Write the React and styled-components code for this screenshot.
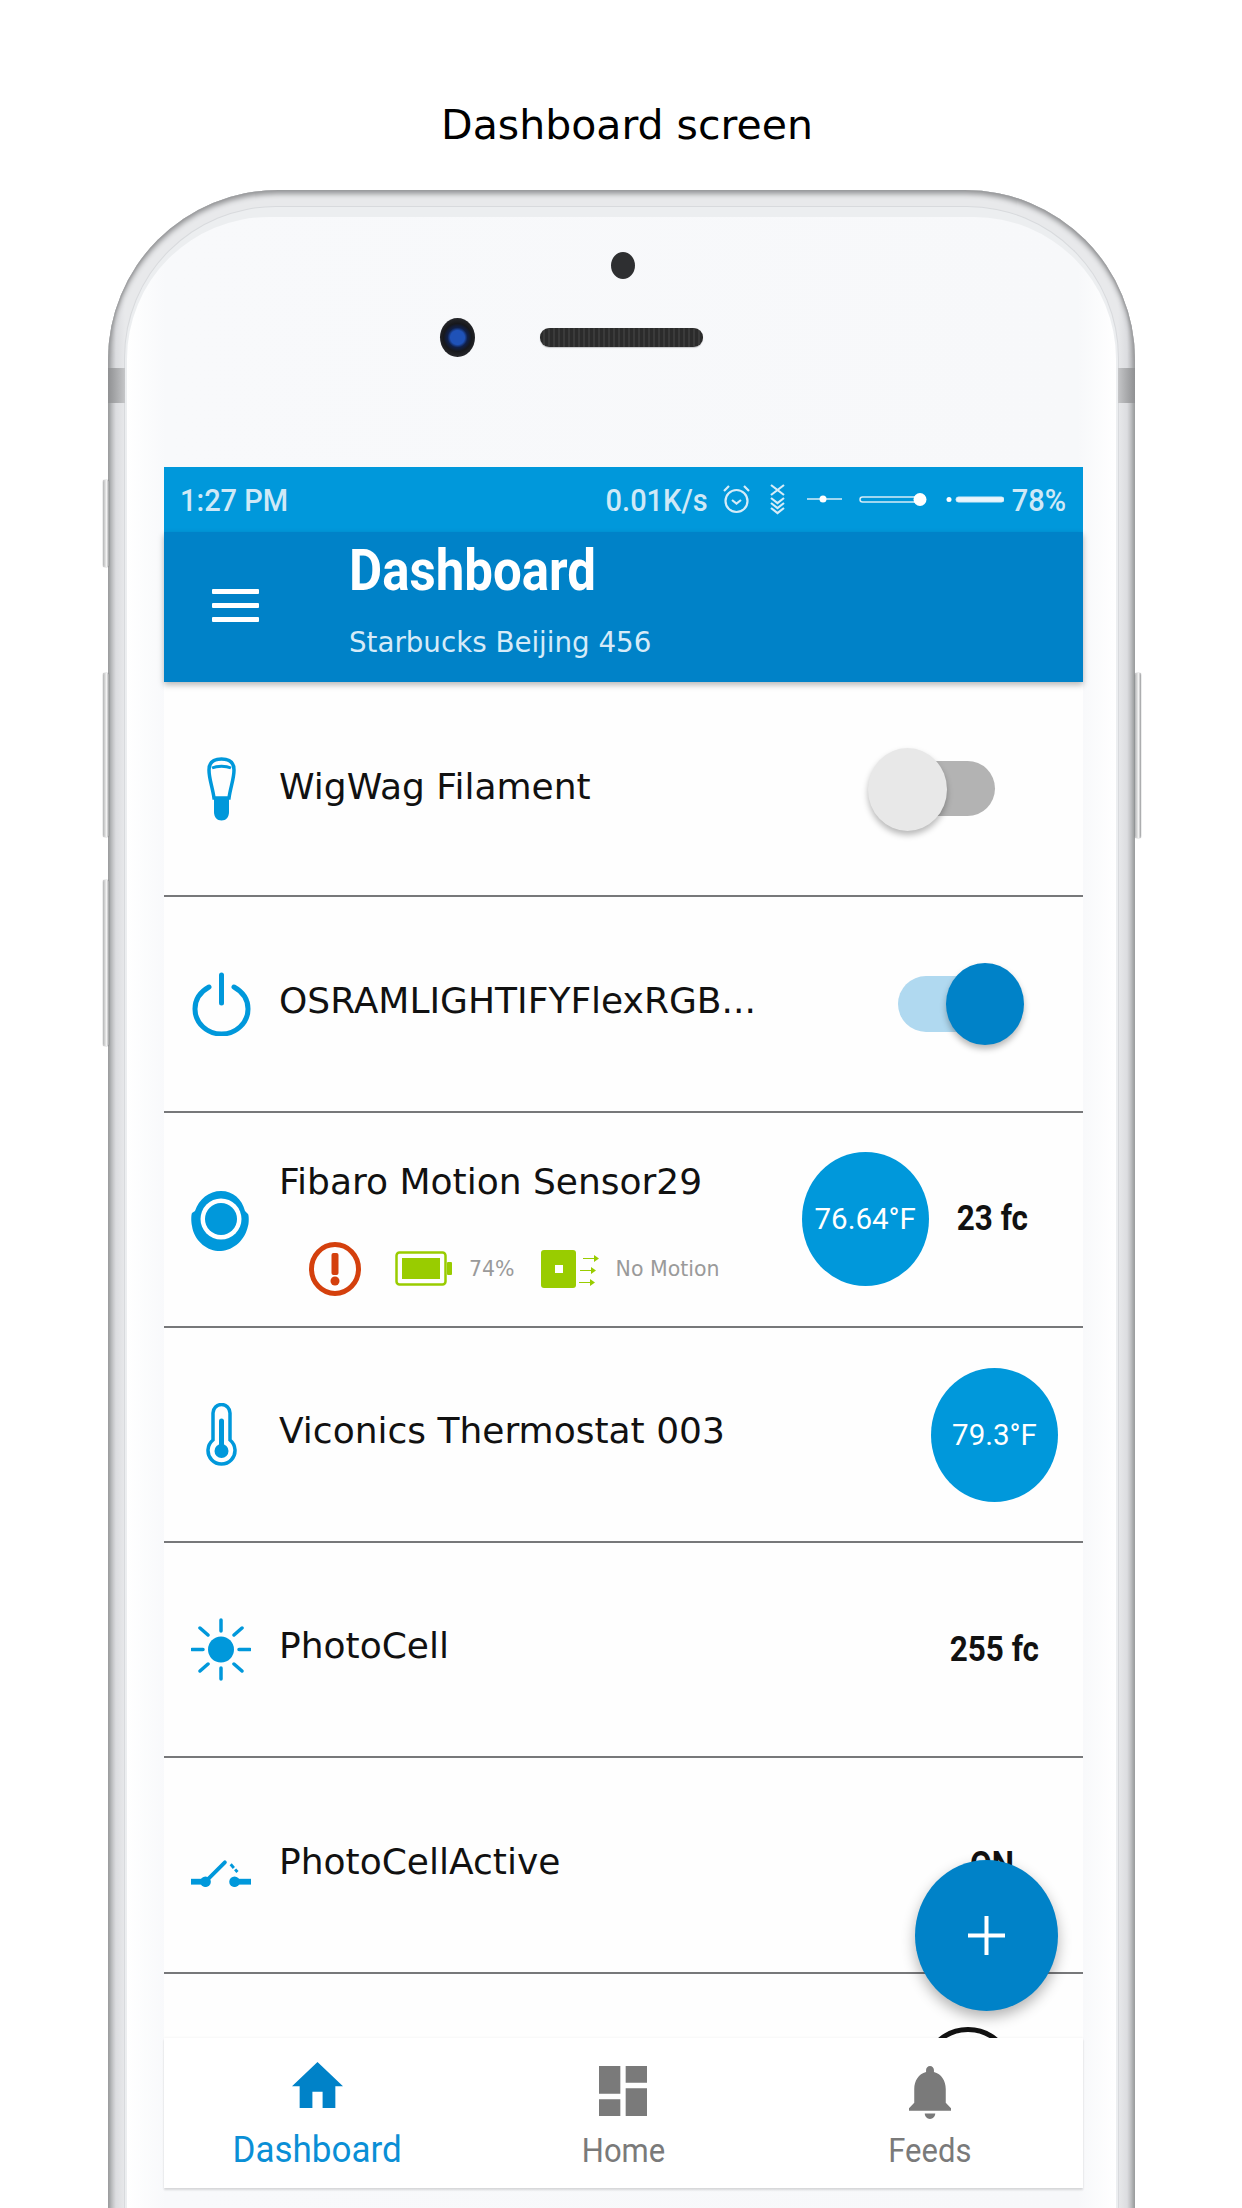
import React from "react";
import styled, { createGlobalStyle } from "styled-components";

const Global = createGlobalStyle`
  html, body { margin: 0; padding: 0; background: #fff; }
`;

const BLUE = "#0098db";
const DEEP = "#0082c8";
const GREEN = "#99cc00";
const SANS = '"DejaVu Sans", sans-serif';

const Page = styled.div`
  width: 1242px;
  height: 2208px;
  overflow: hidden;
  background: #fff;
  display: flex;
  flex-direction: column;
  align-items: flex-start;
`;
const Caption = styled.h1`
  flex: none;
  margin: 0;
  width: 100%;
  height: 190px;
  box-sizing: border-box;
  padding: 100px 0 0 12px;
  text-align: center;
  font: 400 41px/50px ${SANS};
  color: #000;
`;
const Phone = styled.div`
  position: relative;
  flex: none;
  margin-left: 108px;
  width: 1027px;
  height: 2100px;
  box-sizing: border-box;
  padding: 16px 16px 0;
  border-radius: 170px 170px 0 0;
  background: linear-gradient(
    90deg,
    #a8a9ab 0,
    #dcdde0 8px,
    #e8e9eb 17px,
    #e8e9eb calc(100% - 17px),
    #dcdde0 calc(100% - 8px),
    #a8a9ab 100%
  );
  box-shadow: inset 0 3px 5px 1px #98999b, inset 1px 0 2px #a2a3a5, inset -1px 0 2px #a2a3a5;
`;
const Antenna = styled.span`
  position: absolute;
  top: 178px;
  ${(p) => (p.$right ? "right: 0;" : "left: 0;")}
  width: 17px;
  height: 35px;
  background: linear-gradient(${(p) => (p.$right ? "270deg" : "90deg")}, #8f9092, #c5c6c8);
`;
const SideKey = styled.span`
  position: absolute;
  top: ${(p) => p.$top}px;
  height: ${(p) => p.$h}px;
  ${(p) => (p.$right ? "right: -6px;" : "left: -5px;")}
  width: 6px;
  border-radius: 2px;
  background: linear-gradient(90deg, #b4b5b6, #f4f4f4 60%, #9a9b9d);
  box-shadow: 0 0 1px #44454a;
`;
const Ring = styled.div`
  height: 100%;
  box-sizing: border-box;
  padding: 10px 2px 0;
  border: 1px solid #d8dadd;
  border-bottom: 0;
  border-radius: 152px 152px 0 0;
  background: #eceef0;
`;
const Face = styled.div`
  height: 100%;
  box-sizing: border-box;
  padding: 35px 37px 0;
  border-radius: 142px 142px 0 0;
  background: linear-gradient(
    90deg,
    #fff 0,
    #f8f9fb 38px,
    #f7f8fa calc(100% - 38px),
    #fff 100%
  );
  display: flex;
  flex-direction: column;
`;
const Sensor = styled.span`
  align-self: center;
  margin-left: 3px;
  width: 24px;
  height: 27px;
  border-radius: 50%;
  background: #2e2f31;
`;
const CameraRow = styled.div`
  display: flex;
  align-items: center;
  gap: 65px;
  margin-top: 39px;
  padding-left: 276px;
  height: 39px;
`;
const Camera = styled.span`
  width: 35px;
  height: 39px;
  border-radius: 50%;
  background: radial-gradient(circle at 50% 50%, #1f52b8 0 7px, #10204a 10px, #17181c 14px, #3b3c40 100%);
`;
const Speaker = styled.span`
  width: 163px;
  height: 19px;
  border-radius: 9px;
  background: repeating-linear-gradient(90deg, #2b2b2b 0 3px, #3a3a3a 3px 5px);
  box-shadow: 0 1px 1px #c8c9cb;
`;
const Screen = styled.main`
  position: relative;
  margin-top: 110px;
  width: 919px;
  height: 1721px;
  flex: none;
  display: flex;
  flex-direction: column;
  background: #fefefe;
`;
const StatusBar = styled.div`
  flex: none;
  height: 65px;
  box-sizing: border-box;
  padding: 0 17px 0 16px;
  display: flex;
  align-items: center;
  justify-content: space-between;
  background: ${BLUE};
  color: #cfe9f7;
`;
const StatusText = styled.span`
  font: 500 29px/34px Roboto, sans-serif;
  display: inline-block;
  transform: scaleY(1.06);
`;
const StatusRight = styled.div`
  display: flex;
  align-items: center;
  gap: 12px;
  svg {
    margin: 0 -4px 0 3px;
  }
`;
const Header = styled.header`
  position: relative;
  z-index: 2;
  flex: none;
  height: 150px;
  box-sizing: border-box;
  padding-left: 48px;
  display: flex;
  align-items: center;
  gap: 90px;
  background: ${DEEP};
  box-shadow: 0 3px 6px rgba(0, 0, 0, 0.28);
`;
const Burger = styled.div`
  width: 47px;
  margin-top: -4px;
  display: flex;
  flex-direction: column;
  gap: 9px;
  & > span {
    height: 5px;
    background: #fff;
    border-radius: 1px;
  }
`;
const HeadText = styled.div`
  display: flex;
  flex-direction: column;
  gap: 30px;
  margin-top: -6px;
`;
const Title = styled.div`
  font: 700 51px/48px Roboto, sans-serif;
  color: #fff;
  transform: scaleY(1.13);
  transform-origin: left center;
`;
const Subtitle = styled.div`
  font: 400 27.7px/36px ${SANS};
  color: #d6ebf8;
`;
const List = styled.div`
  flex: 1;
  min-height: 0;
  overflow: hidden;
`;
const Row = styled.div`
  height: 213.3px;
  border-bottom: 2px solid #77787a;
  display: flex;
  align-items: center;
  padding-left: 27px;
`;
const IconBox = styled.div`
  flex: none;
  width: 60px;
  height: 70px;
  margin-top: ${(p) => p.$shift || 0}px;
  display: flex;
  align-items: center;
  justify-content: center;
`;
const Main = styled.div`
  flex: 1;
  min-width: 0;
  margin-left: 28px;
  display: flex;
  flex-direction: column;
  gap: ${(p) => p.$gap || 0}px;
  margin-top: ${(p) => p.$shift || 0}px;
`;
const Label = styled.div`
  font: 400 36px/44px ${SANS};
  color: #111;
  white-space: nowrap;
`;
const Meta = styled.div`
  display: flex;
  align-items: center;
  padding-left: 30px;
  height: 54px;
`;
const MetaText = styled.span`
  font: 400 20.5px/24px ${SANS};
  color: #9a9a9a;
  margin-left: ${(p) => p.$ml}px;
`;
const Trail = styled.div`
  flex: none;
  display: flex;
  align-items: center;
  gap: 28px;
  padding-right: ${(p) => p.$pr}px;
`;
const Bubble = styled.div`
  width: 127px;
  height: 134px;
  border-radius: 50%;
  background: ${BLUE};
  color: #fff;
  display: flex;
  align-items: center;
  justify-content: center;
  font: 400 29.5px/34px Roboto, sans-serif;
`;
const Reading = styled.span`
  font: 700 31.5px/34px Roboto, sans-serif;
  color: #111;
  display: inline-block;
  transform: scaleY(1.1);
`;
const Track = styled.div`
  position: relative;
  width: ${(p) => (p.$on ? 87 : 95)}px;
  height: ${(p) => (p.$on ? 56 : 55)}px;
  border-radius: 28px;
  background: ${(p) => (p.$on ? "#b0d9f0" : "#b3b3b3")};
`;
const Thumb = styled.span`
  position: absolute;
  top: -13px;
  ${(p) => (p.$on ? "right: -39px; background: #0082c8;" : "left: -32px; background: #e8e8e8;")}
  width: ${(p) => (p.$on ? 78 : 79)}px;
  height: ${(p) => (p.$on ? 82 : 83)}px;
  border-radius: 50%;
  box-shadow: 0 4px 6px rgba(0, 0, 0, 0.28);
`;
const Dial = styled.div`
  width: 92px;
  height: 92px;
  box-sizing: border-box;
  border: 5px solid #111;
  border-radius: 50%;
  margin-top: -14px;
`;
const Fab = styled.button`
  position: absolute;
  z-index: 3;
  right: 25px;
  bottom: 177px;
  width: 143px;
  height: 151px;
  padding: 0;
  border: 0;
  border-radius: 50%;
  background: ${DEEP};
  box-shadow: 0 6px 14px rgba(0, 0, 0, 0.3);
  display: flex;
  align-items: center;
  justify-content: center;
`;
const Nav = styled.nav`
  position: relative;
  z-index: 2;
  flex: none;
  height: 150px;
  display: grid;
  grid-template-columns: repeat(3, 1fr);
  background: #fff;
  box-shadow: 0 2px 2px rgba(0, 0, 0, 0.14), 0 -1px 2px rgba(0, 0, 0, 0.03);
`;
const Tab = styled.div`
  box-sizing: border-box;
  display: flex;
  flex-direction: column;
  align-items: center;
  justify-content: space-between;
  padding: ${(p) => (p.$active ? "24px 0 21px" : "28px 0 19px")};
  color: ${(p) => (p.$active ? "#0a8fd6" : "#7a7a7a")};
  svg {
    display: block;
    color: ${(p) => (p.$active ? DEEP : "#7a7a7a")};
  }
`;
const TabLabel = styled.span`
  font: 400 ${(p) => (p.$active ? 35 : 31)}px/34px Roboto, sans-serif;
  display: inline-block;
  transform: scaleY(1.05);
`;

const StatusGlyphs = () => (
  <svg width="281" height="32" viewBox="0 0 281 32" fill="none" stroke="#d5ecf8">
    <circle cx="13.5" cy="17" r="11" strokeWidth="2.2" />
    <path d="M9 16l4.5 3.5L18 16M1 7l5-5M26 7l-5-5" strokeWidth="2.2" />
    <path d="M48 1l13 10M61 1L48 11" strokeWidth="2.2" />
    <path d="M48 14l6.500 5 6.500-5M48 19l6.500 5 6.500-5M48 24l6.500 5 6.500-5" strokeWidth="2.2" />
    <path d="M84 15h35" strokeWidth="1.5" />
    <circle cx="100" cy="15" r="3.5" fill="#fff" stroke="none" />
    <rect x="137" y="13" width="62" height="5" rx="2.5" strokeWidth="1.5" />
    <circle cx="197" cy="15.5" r="6.5" fill="#fff" stroke="none" />
    <circle cx="226" cy="15.5" r="2.5" fill="#fff" stroke="none" />
    <rect x="233" y="13" width="48" height="5" rx="2.5" fill="#e9f5fc" strokeWidth="1" />
  </svg>
);
const BulbIcon = () => (
  <svg width="31" height="64" viewBox="0 0 31 64" fill="none">
    <path d="M3 13C3 5 8 2 15.500 2S28 5 28 13c0 9-3.500 17-5 28H8C6.500 30 3 22 3 13z" stroke={BLUE} strokeWidth="3.500" />
    <path d="M6 11c5-2.500 14-2.500 19 0" stroke={BLUE} strokeWidth="3" />
    <path d="M8 40h15v15c0 5-3 8.500-7.500 8.500S8 60 8 55z" fill={BLUE} />
  </svg>
);
const PowerIcon = () => (
  <svg width="59" height="64" viewBox="0 0 59 64" fill="none" stroke={BLUE} strokeWidth="5" strokeLinecap="round">
    <path d="M17 15C8 20 3 28 3 37c0 14 12 25 26.500 25S56 51 56 37c0-9-5-17-14-22" />
    <path d="M29.500 3v28" />
  </svg>
);
const FibaroIcon = () => (
  <svg width="60" height="60" viewBox="0 0 60 60" style={{ marginTop: 3 }}>
    <path d="M30 0c12 0 21 8 24 20l3 3c1 1 1 9 0 12-3 14-14 24-27 25S3 50 1 35c-1-4-1-11 0-13l3-2C8 8 18 0 30 0z" fill={BLUE} />
    <circle cx="30" cy="28" r="20.500" fill="#fff" />
    <circle cx="30" cy="28" r="16" fill={BLUE} />
  </svg>
);
const ThermoIcon = () => (
  <svg width="31" height="64" viewBox="0 0 31 64" fill="none">
    <path d="M7 37V10a8.500 8.500 0 0117 0v27a13.500 13.500 0 11-17 0z" stroke={BLUE} strokeWidth="3.500" />
    <path d="M15.500 18v30" stroke={BLUE} strokeWidth="5" strokeLinecap="round" />
    <circle cx="15.500" cy="48" r="7" fill={BLUE} />
  </svg>
);
const SunIcon = () => (
  <svg width="60" height="63" viewBox="0 0 60 63" stroke={BLUE} strokeWidth="3.500" strokeLinecap="round">
    <circle cx="30" cy="31.500" r="13" fill={BLUE} stroke="none" />
    <path d="M30 2v11M30 50v11M1 31.500h11M48 31.500h11M9 10l8 7M43 46l8 7M9 53l8-7M43 17l8-7" />
  </svg>
);
const SwitchIcon = () => (
  <svg width="62" height="28" viewBox="0 0 62 28" fill="none" stroke={BLUE}>
    <path d="M0 23h15" strokeWidth="6" />
    <circle cx="15" cy="23" r="5.500" fill={BLUE} stroke="none" />
    <path d="M15 23L35 3" strokeWidth="4" strokeLinecap="round" />
    <path d="M41 5l7 8" strokeWidth="3" strokeDasharray="5 2" />
    <circle cx="45" cy="23" r="5.500" fill={BLUE} stroke="none" />
    <path d="M45 23h17" strokeWidth="6" />
  </svg>
);
const AlertIcon = () => (
  <svg width="52" height="54" viewBox="0 0 52 54" fill="#d4400d">
    <ellipse cx="26" cy="27" rx="23.500" ry="24.500" fill="none" stroke="#d4400d" strokeWidth="5" />
    <rect x="22.500" y="11" width="7" height="22" rx="2" />
    <circle cx="26" cy="39" r="4.500" />
  </svg>
);
const BatteryIcon = () => (
  <svg width="58" height="35" viewBox="0 0 58 35" style={{ marginLeft: 34 }}>
    <rect x="1.500" y="1.500" width="49" height="32" rx="3" fill="none" stroke={GREEN} strokeWidth="2.500" />
    <rect x="7" y="7" width="38" height="21" fill={GREEN} />
    <rect x="52" y="11" width="5" height="13" rx="1" fill={GREEN} />
  </svg>
);
const MotionIcon = () => (
  <svg width="58" height="38" viewBox="0 0 58 38" style={{ marginLeft: 26 }} fill={GREEN}>
    <rect x="0" y="0" width="35" height="38" rx="3" />
    <rect x="14" y="15" width="8" height="8" fill="#fff" />
    <path d="M42 8h11V5l5 3.500-5 3.500V9H42zM39 20h11v-3l5 3.500-5 3.500v-3H39zM38 32h11v-3l5 3.500-5 3.500v-3H38z" />
  </svg>
);
const PlusIcon = () => (
  <svg width="37" height="39" viewBox="0 0 37 39" stroke="#fff" strokeWidth="4">
    <path d="M18.500 0v39M0 19.500h37" />
  </svg>
);
const HomeIcon = () => (
  <svg width="51" height="46" viewBox="2 3 20 17" fill="currentColor" preserveAspectRatio="none">
    <path d="M10 20v-6h4v6h5v-8h3L12 3 2 12h3v8z" />
  </svg>
);
const PanelIcon = () => (
  <svg width="48" height="50" viewBox="3 3 18 18" fill="currentColor" preserveAspectRatio="none">
    <path d="M3 13h8V3H3v10zm0 8h8v-6H3v6zm10 0h8V11h-8v10zm0-18v6h8V3h-8z" />
  </svg>
);
const BellIcon = () => (
  <svg width="42" height="53" viewBox="4 2.500 16 19.500" fill="currentColor" preserveAspectRatio="none">
    <path d="M12 22c1.100 0 2-.9 2-2h-4c0 1.100.9 2 2 2zm6-6v-5c0-3.070-1.640-5.640-4.500-6.320V4c0-.83-.67-1.500-1.500-1.500s-1.500.67-1.500 1.500v.68C7.630 5.360 6 7.920 6 11v5l-2 2v1h16v-1l-2-2z" />
  </svg>
);

export default function App() {
  return (
    <Page>
      <Global />
      <Caption>Dashboard screen</Caption>
      <Phone>
        <Antenna />
        <Antenna $right />
        <SideKey $top={290} $h={87} />
        <SideKey $top={483} $h={164} />
        <SideKey $top={690} $h={166} />
        <SideKey $right $top={483} $h={165} />
        <Ring>
          <Face>
            <Sensor />
            <CameraRow>
              <Camera />
              <Speaker />
            </CameraRow>
            <Screen>
              <StatusBar>
                <StatusText>1:27 PM</StatusText>
                <StatusRight>
                  <StatusText>0.01K/s</StatusText>
                  <StatusGlyphs />
                  <StatusText>78%</StatusText>
                </StatusRight>
              </StatusBar>
              <Header>
                <Burger>
                  <span />
                  <span />
                  <span />
                </Burger>
                <HeadText>
                  <Title>Dashboard</Title>
                  <Subtitle>Starbucks Beijing 456</Subtitle>
                </HeadText>
              </Header>
              <List>
                <Row>
                  <IconBox><BulbIcon /></IconBox>
                  <Main $shift={-4}><Label>WigWag Filament</Label></Main>
                  <Trail $pr={88}><Track><Thumb /></Track></Trail>
                </Row>
                <Row>
                  <IconBox><PowerIcon /></IconBox>
                  <Main $shift={-6}><Label>OSRAMLIGHTIFYFlexRGB...</Label></Main>
                  <Trail $pr={98}><Track $on><Thumb $on /></Track></Trail>
                </Row>
                <Row>
                  <IconBox><FibaroIcon /></IconBox>
                  <Main $gap={38} $shift={17}>
                    <Label>Fibaro Motion Sensor29</Label>
                    <Meta>
                      <AlertIcon />
                      <BatteryIcon />
                      <MetaText $ml={16}>74%</MetaText>
                      <MotionIcon />
                      <MetaText $ml={17}>No Motion</MetaText>
                    </Meta>
                  </Main>
                  <Trail $pr={55}>
                    <Bubble>76.64°F</Bubble>
                    <Reading>23 fc</Reading>
                  </Trail>
                </Row>
                <Row>
                  <IconBox><ThermoIcon /></IconBox>
                  <Main $shift={-7}><Label>Viconics Thermostat 003</Label></Main>
                  <Trail $pr={25}><Bubble>79.3°F</Bubble></Trail>
                </Row>
                <Row>
                  <IconBox><SunIcon /></IconBox>
                  <Main $shift={-7}><Label>PhotoCell</Label></Main>
                  <Trail $pr={44}><Reading>255 fc</Reading></Trail>
                </Row>
                <Row>
                  <IconBox $shift={16}><SwitchIcon /></IconBox>
                  <Main $shift={-7}><Label>PhotoCellActive</Label></Main>
                  <Trail $pr={69}><Reading>ON</Reading></Trail>
                </Row>
                <Row>
                  <Main />
                  <Trail $pr={69}><Dial /></Trail>
                </Row>
              </List>
              <Fab aria-label="Add"><PlusIcon /></Fab>
              <Nav>
                <Tab $active>
                  <HomeIcon />
                  <TabLabel $active>Dashboard</TabLabel>
                </Tab>
                <Tab>
                  <PanelIcon />
                  <TabLabel>Home</TabLabel>
                </Tab>
                <Tab>
                  <BellIcon />
                  <TabLabel>Feeds</TabLabel>
                </Tab>
              </Nav>
            </Screen>
          </Face>
        </Ring>
      </Phone>
    </Page>
  );
}
